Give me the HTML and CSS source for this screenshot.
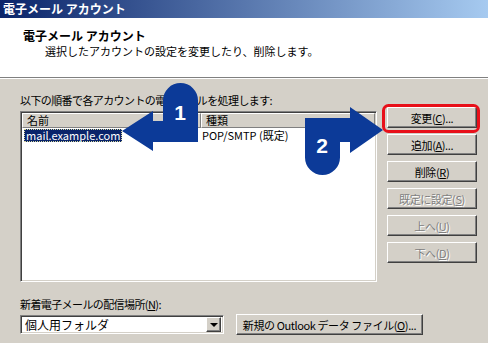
FILE: index.html
```html
<!DOCTYPE html>
<html lang="ja">
<head>
  <meta charset="UTF-8">
  <title>電子メール アカウント</title>
  <link rel="stylesheet" href="styles.css">
</head>
<body>

<div class="titlebar">電子メール アカウント</div>

<div class="header">
  <h1>電子メール アカウント</h1>
  <p>選択したアカウントの設定を変更したり、削除します。</p>
</div>

<div class="main">
  <div class="left">
    <div class="label">以下の順番で各アカウントの電子メールを処理します:</div>
    <div class="list">
      <div class="list-head">
        <div class="col-head col-name">名前</div>
        <div class="col-head col-type">種類</div>
      </div>
      <div class="list-row">
        <div class="col-name"><span class="selected">mail.example.com</span></div>
        <div class="col-type">POP/SMTP (既定)</div>
      </div>
    </div>
  </div>

  <div class="right">
    <button class="btn">変更(<u>C</u>)...</button>
    <button class="btn">追加(<u>A</u>)...</button>
    <button class="btn">削除(<u>R</u>)</button>
    <button class="btn disabled">既定に設定(<u>S</u>)</button>
    <button class="btn disabled">上へ(<u>U</u>)</button>
    <button class="btn disabled">下へ(<u>D</u>)</button>
  </div>
</div>

<div class="bottom">
  <div class="label">新着電子メールの配信場所(<u>N</u>):</div>
  <div class="bottom-row">
    <div class="combo">
      <span class="combo-text">個人用フォルダ</span>
      <span class="combo-btn"><span class="tri"></span></span>
    </div>
    <button class="btn wide">新規の Outlook データ ファイル(<u>O</u>)...</button>
  </div>
</div>

<!-- 注釈の矢印と枠 -->
<svg class="overlay" width="488" height="343" viewBox="0 0 488 343">
  <rect x="383.5" y="105.5" width="95" height="26" rx="5" fill="none" stroke="#e8101a" stroke-width="3"/>
  <path d="M122 131 L153 111 L153 121 L163 121 L163 100.5 A17.5 17.5 0 0 1 198 100.5 L198 142 L153 142 L153 151 Z" fill="#0c3a98"/>
  <text x="180" y="120" class="num">1</text>
  <path d="M383 130 L350 107 L350 118 L305 118 L305 157.5 A17.5 17.5 0 0 0 340 157.5 L340 142 L350 142 L350 153 Z" fill="#0c3a98"/>
  <text x="322" y="153" class="num">2</text>
</svg>

</body>
</html>
```

FILE: styles.css
```css
body {
  margin: 0;
  width: 488px;
  height: 343px;
  background-color: #d4d0c8;
  font-family: "Noto Sans CJK JP", sans-serif;
  font-size: 11px;
  color: #000;
  position: relative;
  overflow: hidden;
}
u {
  text-decoration: underline;
}
.titlebar {
  height: 18px;
  line-height: 18px;
  padding-left: 3px;
  background: linear-gradient(90deg, #0a246a, #a6caf0);
  color: #fff;
  font-weight: bold;
  font-size: 12px;
}
.header {
  height: 60px;
  box-sizing: border-box;
  padding: 11px 0 0 23px;
  background-color: #fff;
  border-bottom: 1px solid #808080;
}
.header h1 {
  margin: 0;
  font-size: 12px;
  font-weight: bold;
  line-height: 14px;
}
.header p {
  margin: 1px 0 0 22px;
  line-height: 14px;
}
.main {
  display: flex;
  gap: 10px;
  padding: 14px 0 0 20px;
  border-top: 1px solid #fff;
}
.left {
  width: 357px;
}
.label {
  line-height: 14px;
  height: 14px;
  letter-spacing: -0.6px;
}
.list {
  margin-top: 4px;
  height: 171px;
  box-sizing: border-box;
  background-color: #fff;
  border: 1px solid;
  border-color: #808080 #fff #fff #808080;
  box-shadow: inset 1px 1px #404040, inset -1px -1px #d4d0c8;
  padding: 1px 1px 1px 1px;
}
.list-head {
  display: flex;
  height: 15px;
}
.col-head {
  box-sizing: border-box;
  background-color: #d4d0c8;
  border: 1px solid;
  border-color: #fff #808080 #808080 #fff;
  line-height: 13px;
  padding-left: 4px;
}
.col-name {
  width: 179px;
  flex: none;
}
.col-type {
  flex: 1;
}
.list-row {
  display: flex;
  height: 13px;
  line-height: 13px;
  margin-top: 1px;
}
.list-row .col-type {
  padding-left: 1px;
}
.selected {
  display: inline-block;
  margin-left: 2px;
  padding: 0 2px;
  background-color: #0a246a;
  color: #fff;
  outline: 1px dotted #d8d8a0;
  outline-offset: -1px;
}
.right {
  display: flex;
  flex-direction: column;
  gap: 6px;
  padding-top: 14px;
}
.btn {
  width: 90px;
  height: 21px;
  box-sizing: border-box;
  padding: 0;
  font-family: inherit;
  font-size: 11px;
  letter-spacing: -0.4px;
  color: #000;
  background-color: #d4d0c8;
  border: 1px solid;
  border-color: #fff #404040 #404040 #fff;
  box-shadow: inset -1px -1px #808080;
}
.btn.disabled {
  color: #808080;
  text-shadow: 1px 1px #fff;
}
.btn.wide {
  width: 187px;
}
.bottom {
  padding: 15px 0 0 20px;
}
.bottom-row {
  display: flex;
  align-items: center;
  gap: 12px;
  margin-top: 3px;
}
.combo {
  display: flex;
  align-items: center;
  width: 204px;
  height: 19px;
  box-sizing: border-box;
  background-color: #fff;
  border: 1px solid;
  border-color: #808080 #fff #fff #808080;
  box-shadow: inset 1px 1px #404040, inset -1px -1px #d4d0c8;
  padding: 2px;
}
.combo-text {
  padding-left: 2px;
  font-size: 12px;
}
.combo-btn {
  margin-left: auto;
  width: 15px;
  height: 15px;
  box-sizing: border-box;
  display: flex;
  align-items: center;
  justify-content: center;
  background-color: #d4d0c8;
  border: 1px solid;
  border-color: #fff #404040 #404040 #fff;
  box-shadow: inset -1px -1px #808080;
}
.tri {
  width: 0;
  height: 0;
  border-left: 4px solid transparent;
  border-right: 4px solid transparent;
  border-top: 4px solid #000;
}
.overlay {
  position: absolute;
  top: 0;
  left: 0;
  pointer-events: none;
}
.num {
  fill: #fff;
  font-family: "Liberation Sans", sans-serif;
  font-weight: bold;
  font-size: 21px;
  text-anchor: middle;
}
```
